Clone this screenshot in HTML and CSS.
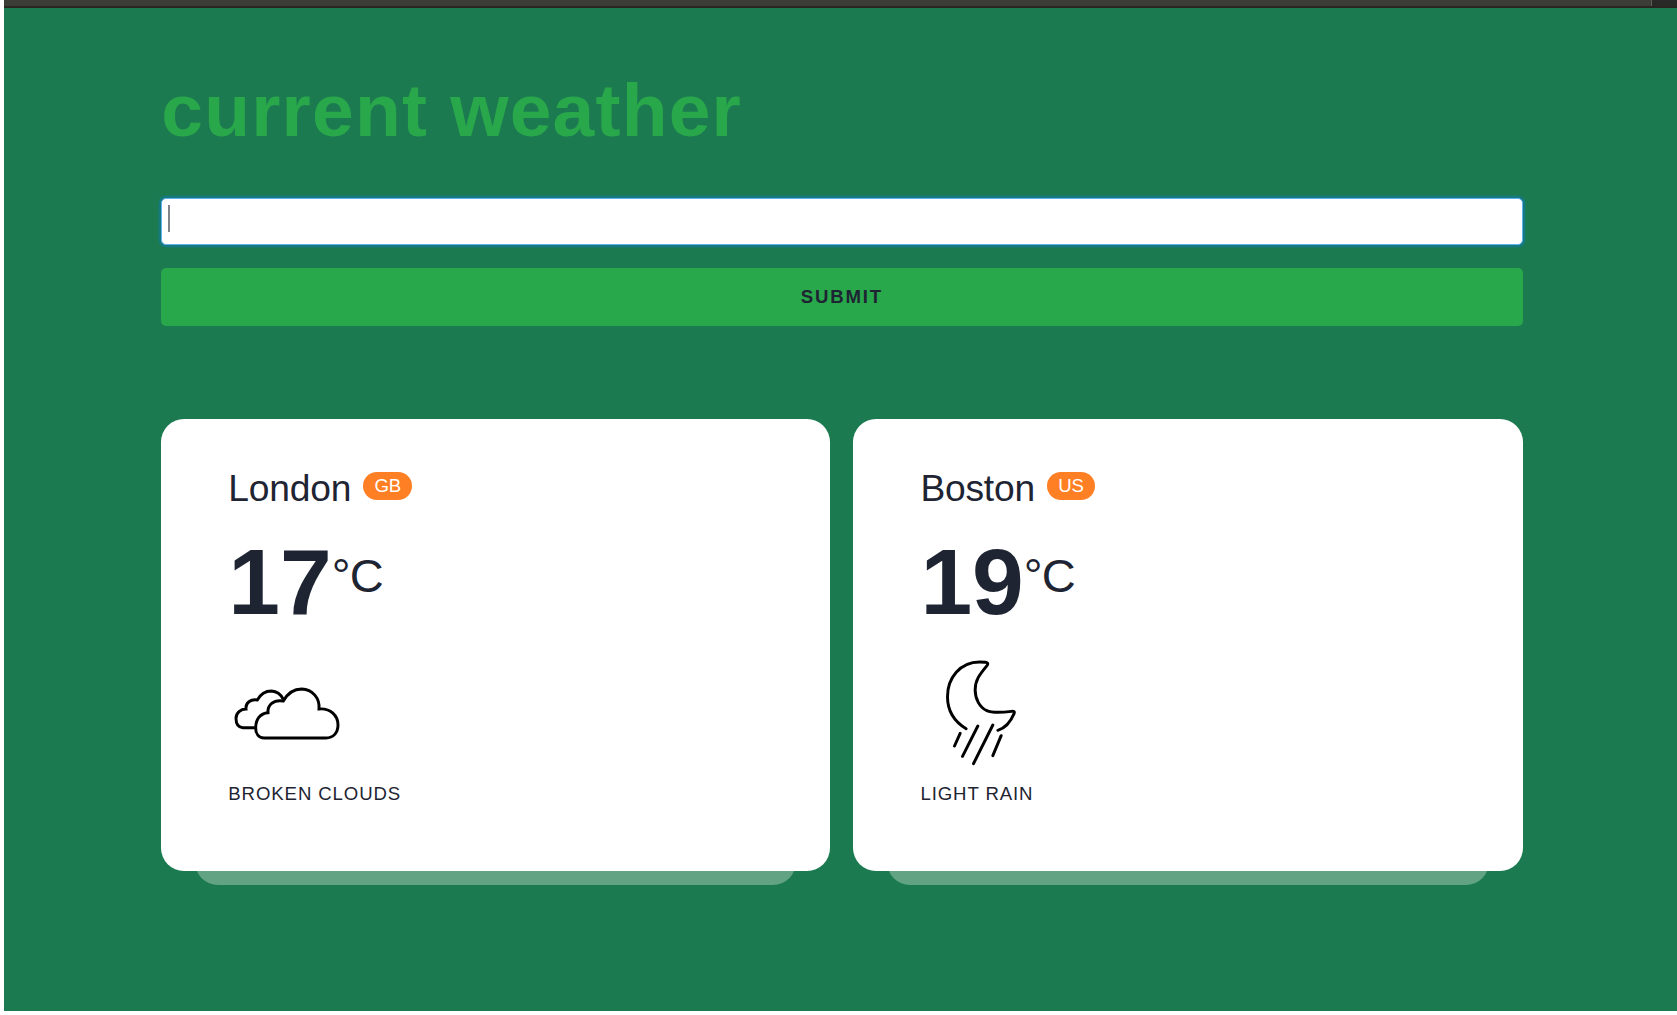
FILE: index.html
```html
<!DOCTYPE html>
<html lang="en">
<head>
<meta charset="utf-8">
<title>current weather</title>
<link rel="stylesheet" href="styles.css">
</head>
<body>
<div class="topbar"><span class="topbar-end"></span></div>
<main class="page">
  <h1 class="title">current weather</h1>
  <form class="search">
    <div class="field"><span class="caret"></span></div>
    <button class="submit" type="button">SUBMIT</button>
  </form>
  <section class="cities">
    <div class="city">
      <article class="card">
        <h2 class="name"><span>London</span><span class="badge">GB</span></h2>
        <div class="temp"><span class="value">17</span><span class="unit">°C</span></div>
        <svg class="icon" viewBox="54 30 360 360">
          <path d="M135 263H98C84 262 78 250 78 235C78 218 92 207 108 207C106 188 122 177 142 180C152 162 166 153 184 153C200 154 212 162 220 178"/>
          <path d="M162 294C146 294 137 281 137 263C137 240 150 219 174 218C172 196 190 178 220 183C234 158 255 147 275 147C308 148 330 175 327 207C362 204 384 227 384 255C384 278 370 294 348 294Z"/>
        </svg>
        <p class="desc">BROKEN CLOUDS</p>
      </article>
      <div class="shade"></div>
    </div>
    <div class="city">
      <article class="card">
        <h2 class="name"><span>Boston</span><span class="badge">US</span></h2>
        <div class="temp"><span class="value">19</span><span class="unit">°C</span></div>
        <svg class="icon round" viewBox="61.5 30 360 360">
          <path d="M200 266C162 243 144 208 144 170C144 114 182 66 240 66C256 66 270 66 263 76C240 104 227 120 227 150C227 176 240 202 262 212C280 220 312 217 336 214C344 213 346 216 344 220C334 244 320 263 295 271"/>
          <path d="M182 280L165 318M235 258L189 349M280 255L222 371M305 287L280 347"/>
        </svg>
        <p class="desc">LIGHT RAIN</p>
      </article>
      <div class="shade"></div>
    </div>
  </section>
</main>
</body>
</html>
```
FILE: styles.css
```css
* { box-sizing: border-box; margin: 0; padding: 0; }
body {
  width: 1677px;
  height: 1015px;
  padding: 0 0 4px 4px;
  display: flex;
  flex-direction: column;
  overflow: hidden;
  background: #fff;
  color: #1e2432;
  font-family: "Liberation Sans", Arial, sans-serif;
}
.topbar {
  height: 8px;
  flex: none;
  display: flex;
  justify-content: flex-end;
  background: #3d3d38;
  border-bottom: 2px solid #2b2522;
}
.topbar-end { width: 26px; background: #292927; border-left: 1px solid #5c5c58; }
.page { flex: 1; padding: 57px 154.5px 0 157.3px; background: #1c7a50; }
.title {
  font-size: 75px;
  line-height: 90px;
  letter-spacing: 1.2px;
  color: #29a84b;
}
.search { margin-top: 43px; display: flex; flex-direction: column; gap: 23px; }
.field {
  height: 47px;
  padding: 6px 6px;
  background: #fff;
  border: 1px solid #63b0ee;
  border-radius: 5px;
  box-shadow: 0 0 0 2.5px #147a7e;
}
.caret { display: block; width: 1.5px; height: 27px; background: #80848a; }
.submit {
  height: 58px;
  border: 0;
  border-radius: 5px;
  background: #29a84b;
  color: #1e2432;
  font: bold 18.6px "Liberation Sans", Arial, sans-serif;
  letter-spacing: 1.8px;
}
.cities { margin-top: 93.4px; display: grid; grid-template-columns: 1fr 1fr; gap: 23px; }
.city { isolation: isolate; }
.card {
  height: 451.6px;
  padding: 46.6px 67px 0;
  background: #fff;
  border-radius: 23px;
}
.shade {
  position: relative;
  z-index: -1;
  height: 60px;
  margin: -46px 34px 0;
  border-radius: 23px;
  background: #61a383;
}
.name { display: flex; font-size: 37.2px; line-height: 44px; font-weight: 400; letter-spacing: -0.2px; }
.badge {
  height: 28px;
  margin: 6px 0 0 12px;
  padding: 0 11.2px;
  border-radius: 14px;
  background: #ff7f24;
  color: #fff;
  font-size: 18.6px;
  line-height: 27px;
}
.temp { display: flex; height: 100px; margin-top: 22px; }
.value { font-size: 93px; line-height: 101px; font-weight: 700; }
.unit { font-size: 47px; line-height: 87px; letter-spacing: -0.8px; }
.icon {
  display: block;
  width: 120px;
  height: 120px;
  margin-top: 18px;
  fill: none;
  stroke: #000;
  stroke-width: 8.8;
}
.round { stroke-linecap: round; stroke-linejoin: round; }
.desc { margin-top: 12px; font-size: 18.6px; line-height: 24px; letter-spacing: 0.9px; }
```
